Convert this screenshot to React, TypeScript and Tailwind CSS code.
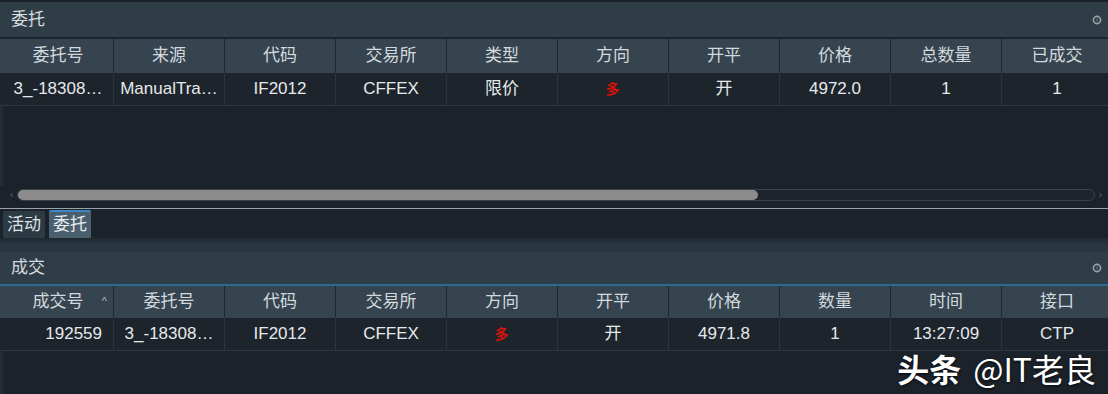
import React from 'react';

const FONT = "font-['Liberation_Sans','Noto_Sans_CJK_SC',sans-serif]";

const ORDER_COLS = ['委托号', '来源', '代码', '交易所', '类型', '方向', '开平', '价格', '总数量', '已成交'];
const ORDER_ROW = ['3_-18308…', 'ManualTra…', 'IF2012', 'CFFEX', '限价', 'DIR', '开', '4972.0', '1', '1'];

const TRADE_COLS = ['成交号', '委托号', '代码', '交易所', '方向', '开平', '价格', '数量', '时间', '接口'];
const TRADE_ROW = ['192559', '3_-18308…', 'IF2012', 'CFFEX', 'DIR', '开', '4971.8', '1', '13:27:09', 'CTP'];

function PinIcon() {
  return (
    <svg width="10" height="10" viewBox="0 0 10 10">
      <circle cx="5" cy="5" r="3.6" fill="none" stroke="#9aa3a9" strokeWidth="1.6" />
      <circle cx="5" cy="5" r="1.2" fill="#5a666e" />
    </svg>
  );
}

function Cell({ v, right }: { v: string; right?: boolean }) {
  if (v === 'DIR') {
    return (
      <div className="w-[111px] shrink-0 flex items-center justify-center border-r border-[#2b353e]">
        <span className="text-[#e0120c] text-[14px] font-bold blur-[0.7px]">多</span>
      </div>
    );
  }
  return (
    <div
      className={`w-[111px] shrink-0 flex items-center border-r border-[#2b353e] text-[17px] text-[#e6e9eb] whitespace-nowrap overflow-hidden ${
        right ? 'justify-end pr-[11px]' : 'justify-center'
      }`}
    >
      {v}
    </div>
  );
}

function Table({ cols, row, sortFirst, headH }: { cols: string[]; row: string[]; sortFirst?: boolean; headH: string }) {
  return (
    <div className="flex flex-col">
      <div className={`flex ${headH} bg-[#35444f] pl-[3px]`}>
        {cols.map((c, i) => (
          <div
            key={c}
            className="w-[111px] shrink-0 flex items-center justify-center border-r border-[#1f282f] text-[17px] text-[#d3d9dd] relative"
          >
            {c}
            {sortFirst && i === 0 ? (
              <span className="absolute right-[6px] top-[7px] text-[11px] text-[#b9c1c6]">^</span>
            ) : null}
          </div>
        ))}
      </div>
      <div className="flex h-[33px] bg-[#1d242c] pl-[3px] border-b border-[#2c363f]">
        {row.map((v, i) => (
          <Cell key={i} v={v} right={sortFirst && i === 0} />
        ))}
      </div>
    </div>
  );
}

export default function App() {
  return (
    <div className={`w-[1108px] h-[394px] overflow-hidden bg-[#1b222a] flex flex-col ${FONT}`}>
      {/* 委托 panel */}
      <div className="h-[2px] bg-[#1a2026]" />
      <div className="h-[37px] shrink-0 bg-[#2f3d47] flex items-center justify-between pl-[11px] pr-[6px] border-b-2 border-[#1d252c]">
        <span className="text-[17px] text-[#d6dcdf]">委托</span>
        <PinIcon />
      </div>
      <Table cols={ORDER_COLS} row={ORDER_ROW} headH="h-[34px]" />
      <div className="h-[80px] shrink-0 bg-[#1b222a] border-l-[3px] border-[#232c34]" />

      {/* horizontal scrollbar */}
      <div className="h-[17px] shrink-0 flex items-center pl-[10px] pr-[6px] gap-[4px]">
        <span className="text-[10px] text-[#5c666d] leading-none">‹</span>
        <div className="flex-1 h-[12px] rounded-[6px] border border-[#39434b] bg-[#1d242b] flex">
          <div className="w-[740px] h-full rounded-[6px] bg-[#8c8c8c]" />
        </div>
        <span className="text-[10px] text-[#5c666d] leading-none">›</span>
      </div>
      <div className="h-[5px] shrink-0" />
      <div className="h-px shrink-0 bg-[#97a2a9]" />

      {/* tabs */}
      <div className="h-[29px] shrink-0 flex items-end gap-[4px] pl-[3px] bg-[#1b222a]">
        <div className="h-[27px] px-[4px] flex items-center bg-[#2c3a44] text-[17px] text-[#dde2e5] rounded-t-[2px]">
          活动
        </div>
        <div className="h-[28px] px-[4px] flex items-center bg-[#4a5f6e] border-t-2 border-[#3f86c4] text-[17px] text-[#e6ebee] rounded-t-[2px]">
          委托
        </div>
      </div>
      <div className="h-[14px] shrink-0 bg-gradient-to-b from-[#1f2830] via-[#2a3741] to-[#2b3842]" />

      {/* 成交 panel */}
      <div className="h-[32px] shrink-0 bg-[#2f3d48] flex items-center justify-between pl-[11px] pr-[6px]">
        <span className="text-[17px] text-[#d6dcdf]">成交</span>
        <PinIcon />
      </div>
      <div className="h-[2px] shrink-0 bg-[#2a6a93]" />
      <Table cols={TRADE_COLS} row={TRADE_ROW} sortFirst headH="h-[32px]" />
      <div className="flex-1 bg-[#1b222a] border-l-[3px] border-[#232c34] relative">
        <div className="absolute right-[12px] top-[1px] flex items-center gap-[12px] text-white text-[32px] leading-none [text-shadow:0_1px_3px_rgba(0,0,0,0.8)] font-['Noto_Sans_CJK_SC',sans-serif]">
          <span className="font-bold">头条</span>
          <span>@IT老良</span>
        </div>
      </div>
    </div>
  );
}
